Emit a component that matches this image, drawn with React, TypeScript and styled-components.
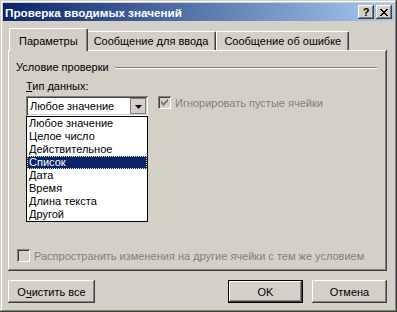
import React from "react";
import styled, { createGlobalStyle } from "styled-components";

const GlobalStyle = createGlobalStyle`
	html, body {
		margin: 0;
		padding: 0;
		background: #d4d0c8;
	}
	body {
		font-family: "Liberation Sans", Arial, sans-serif;
		font-size: 11px;
		color: #000;
	}
`;

const dataTypes = [
	"Любое значение",
	"Целое число",
	"Действительное",
	"Список",
	"Дата",
	"Время",
	"Длина текста",
	"Другой",
];

const tabs = ["Параметры", "Сообщение для ввода", "Сообщение об ошибке"];

const Check = ({ checked }: { checked?: boolean }) => (
	<CheckBox>
		{checked && (
			<svg width="7" height="7" viewBox="0 0 7 7">
				<path
					d="M0 2h1v1h1v1h1V3h1V2h1V1h1V0h1v3h-1v1h-1v1h-1v1h-1v1h-1V6H1V5H0z"
					fill="#808080"
				/>
			</svg>
		)}
	</CheckBox>
);

const App = () => {
	return (
		<>
			<GlobalStyle />
			<Window>
				<TitleBar>
					<Title>Проверка вводимых значений</Title>
					<CaptionButtons>
						<CaptionButton>
							<HelpGlyph>?</HelpGlyph>
						</CaptionButton>
						<CaptionButton>
							<svg width="8" height="7" viewBox="0 0 8 7">
								<path
									d="M0 0h2v1h1v1h2V1h1V0h2v1H7v1H6v1H5v1h1v1h1v1h1v1H6V6H5V5H3v1H2v1H0V6h1V5h1V4h1V3H2V2H1V1H0z"
									fill="#000"
								/>
							</svg>
						</CaptionButton>
					</CaptionButtons>
				</TitleBar>

				<Body>
					<TabRow>
						{tabs.map((t, i) => (
							<Tab key={t} active={i === 0}>
								{t}
							</Tab>
						))}
					</TabRow>

					<Panel>
						<GroupHeader>
							<span>Условие проверки</span>
							<Etched />
						</GroupHeader>

						<GroupBody>
							<FieldLabel>
								<Accel>Т</Accel>ип данных:
							</FieldLabel>
							<FieldRow>
								<ComboWrap>
									<Combo>
										<ComboValue>Любое значение</ComboValue>
										<DropButton>
											<svg width="7" height="4" viewBox="0 0 7 4">
												<path d="M0 0h7L3.5 4z" fill="#000" />
											</svg>
										</DropButton>
									</Combo>
									<DropList>
										{dataTypes.map((d) => (
											<ListItem key={d} selected={d === "Список"}>
												{d}
											</ListItem>
										))}
									</DropList>
								</ComboWrap>
								<CheckRow>
									<Check checked />
									<Muted>Игнорировать пустые ячейки</Muted>
								</CheckRow>
							</FieldRow>
						</GroupBody>

						<BottomCheck>
							<Check />
							<Muted>Распространить изменения на другие ячейки с тем же условием</Muted>
						</BottomCheck>
					</Panel>

					<ButtonRow>
						<Button wide>
							О<Accel>ч</Accel>истить все
						</Button>
						<ButtonGroup>
							<Button isDefault>OK</Button>
							<Button>Отмена</Button>
						</ButtonGroup>
					</ButtonRow>
				</Body>
			</Window>
		</>
	);
};

export default App;

const raised = `
	box-shadow: inset -1px -1px #404040, inset 1px 1px #ffffff,
		inset -2px -2px #808080, inset 2px 2px #d4d0c8;
`;

const sunken = `
	box-shadow: inset 1px 1px #808080, inset -1px -1px #ffffff,
		inset 2px 2px #404040, inset -2px -2px #d4d0c8;
`;

const Window = styled.div`
	width: 397px;
	height: 312px;
	box-sizing: border-box;
	padding: 3px;
	background: #d4d0c8;
	display: flex;
	flex-direction: column;
	box-shadow: inset -1px -1px #404040, inset 1px 1px #d4d0c8,
		inset -2px -2px #808080, inset 2px 2px #ffffff;
`;

const TitleBar = styled.div`
	height: 18px;
	flex: none;
	display: flex;
	align-items: center;
	justify-content: space-between;
	padding: 0 2px;
	background: linear-gradient(to right, #0a246a, #a6caf0);
`;

const Title = styled.div`
	color: #fff;
	font-weight: 700;
	font-size: 11.7px;
	white-space: nowrap;
`;

const CaptionButtons = styled.div`
	display: flex;
	gap: 2px;
`;

const CaptionButton = styled.div`
	width: 16px;
	height: 14px;
	box-sizing: border-box;
	background: #d4d0c8;
	display: flex;
	align-items: center;
	justify-content: center;
	${raised}
`;

const HelpGlyph = styled.span`
	font-weight: 700;
	font-size: 11px;
	line-height: 1;
	margin-top: 1px;
`;

const Body = styled.div`
	flex: 1;
	display: flex;
	flex-direction: column;
	padding: 7px 7px 6px 5px;
	min-height: 0;
`;

const TabRow = styled.div`
	height: 22px;
	flex: none;
	display: flex;
	align-items: flex-end;
	padding-left: 1px;
`;

const Tab = styled.div<{ active?: boolean }>`
	position: relative;
	box-sizing: border-box;
	height: ${({ active }) => (active ? "23px" : "19px")};
	margin: ${({ active }) => (active ? "0 -2px -1px 0" : "0")};
	padding: ${({ active }) => (active ? "2px 9px 0" : "0 7px")};
	display: flex;
	align-items: center;
	white-space: nowrap;
	background: #d4d0c8;
	z-index: ${({ active }) => (active ? 2 : 1)};
	border-top: 1px solid #fff;
	border-left: 1px solid #fff;
	border-right: 1px solid #404040;
	border-radius: 2px 2px 0 0;
	box-shadow: inset -1px 0 #808080;
`;

const Panel = styled.div`
	flex: 1;
	display: flex;
	flex-direction: column;
	box-sizing: border-box;
	padding: 10px 7px 9px 8px;
	box-shadow: inset -1px -1px #404040, inset 1px 1px #ffffff,
		inset -2px -2px #808080;
`;

const GroupHeader = styled.div`
	display: flex;
	align-items: center;
	height: 14px;
	white-space: nowrap;
`;

const Etched = styled.div`
	flex: 1;
	margin: 1px 3px 0 6px;
	border-top: 1px solid #808080;
	border-bottom: 1px solid #ffffff;
`;

const GroupBody = styled.div`
	display: flex;
	flex-direction: column;
	padding-left: 10px;
	margin-top: 6px;
`;

const FieldLabel = styled.div`
	height: 13px;
	line-height: 13px;
	margin-bottom: 3px;
`;

const Accel = styled.span`
	text-decoration: underline;
`;

const FieldRow = styled.div`
	display: flex;
	align-items: flex-start;
	gap: 10px;
`;

const ComboWrap = styled.div`
	position: relative;
	width: 122px;
`;

const Combo = styled.div`
	height: 20px;
	box-sizing: border-box;
	padding: 2px;
	background: #fff;
	display: flex;
	${sunken}
`;

const ComboValue = styled.div`
	flex: 1;
	padding-left: 2px;
	line-height: 16px;
	white-space: nowrap;
	overflow: hidden;
`;

const DropButton = styled.div`
	width: 16px;
	height: 16px;
	box-sizing: border-box;
	border: 1px solid #808080;
	background: #d4d0c8;
	display: flex;
	align-items: center;
	justify-content: center;
	padding-top: 1px;
`;

const DropList = styled.div`
	position: absolute;
	top: 100%;
	left: 0;
	width: 122px;
	box-sizing: border-box;
	border: 1px solid #000;
	background: #fff;
	z-index: 5;
`;

const ListItem = styled.div<{ selected?: boolean }>`
	height: 13px;
	line-height: 13px;
	padding-left: 2px;
	white-space: nowrap;
	background: ${({ selected }) => (selected ? "#0a246a" : "transparent")};
	color: ${({ selected }) => (selected ? "#fff" : "#000")};
	outline: ${({ selected }) => (selected ? "1px dotted #e8e8a0" : "none")};
	outline-offset: -1px;
`;

const CheckRow = styled.div`
	display: flex;
	align-items: center;
	gap: 4px;
	height: 13px;
`;

const CheckBox = styled.div`
	width: 13px;
	height: 13px;
	flex: none;
	box-sizing: border-box;
	background: #d4d0c8;
	display: flex;
	align-items: center;
	justify-content: center;
	${sunken}
`;

const Muted = styled.span`
	color: #808080;
	white-space: nowrap;
`;

const BottomCheck = styled.div`
	margin-top: auto;
	margin-left: 1px;
	display: flex;
	align-items: center;
	gap: 4px;
	height: 13px;
`;

const ButtonRow = styled.div`
	flex: none;
	display: flex;
	justify-content: space-between;
	margin-top: 9px;
`;

const ButtonGroup = styled.div`
	display: flex;
	gap: 9px;
`;

const Button = styled.div<{ wide?: boolean; isDefault?: boolean }>`
	width: ${({ wide }) => (wide ? "87px" : "75px")};
	height: 23px;
	box-sizing: border-box;
	display: flex;
	align-items: center;
	justify-content: center;
	white-space: nowrap;
	background: #d4d0c8;
	${({ isDefault }) =>
		isDefault
			? `box-shadow: inset 0 0 0 1px #000, inset -2px -2px #404040, inset 2px 2px #ffffff,
		inset -3px -3px #808080;`
			: raised}
`;
